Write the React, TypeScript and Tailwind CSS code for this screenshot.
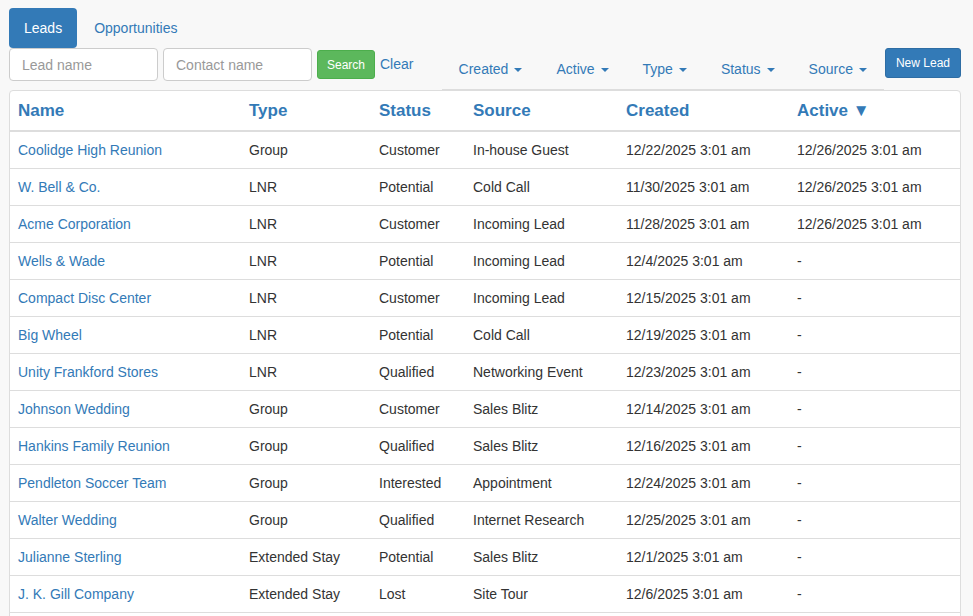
import React from "react";

type Lead = {
  name: string;
  type: string;
  status: string;
  source: string;
  created: string;
  active: string;
};

const leads: Lead[] = [
  { name: "Coolidge High Reunion", type: "Group", status: "Customer", source: "In-house Guest", created: "12/22/2025 3:01 am", active: "12/26/2025 3:01 am" },
  { name: "W. Bell & Co.", type: "LNR", status: "Potential", source: "Cold Call", created: "11/30/2025 3:01 am", active: "12/26/2025 3:01 am" },
  { name: "Acme Corporation", type: "LNR", status: "Customer", source: "Incoming Lead", created: "11/28/2025 3:01 am", active: "12/26/2025 3:01 am" },
  { name: "Wells & Wade", type: "LNR", status: "Potential", source: "Incoming Lead", created: "12/4/2025 3:01 am", active: "-" },
  { name: "Compact Disc Center", type: "LNR", status: "Customer", source: "Incoming Lead", created: "12/15/2025 3:01 am", active: "-" },
  { name: "Big Wheel", type: "LNR", status: "Potential", source: "Cold Call", created: "12/19/2025 3:01 am", active: "-" },
  { name: "Unity Frankford Stores", type: "LNR", status: "Qualified", source: "Networking Event", created: "12/23/2025 3:01 am", active: "-" },
  { name: "Johnson Wedding", type: "Group", status: "Customer", source: "Sales Blitz", created: "12/14/2025 3:01 am", active: "-" },
  { name: "Hankins Family Reunion", type: "Group", status: "Qualified", source: "Sales Blitz", created: "12/16/2025 3:01 am", active: "-" },
  { name: "Pendleton Soccer Team", type: "Group", status: "Interested", source: "Appointment", created: "12/24/2025 3:01 am", active: "-" },
  { name: "Walter Wedding", type: "Group", status: "Qualified", source: "Internet Research", created: "12/25/2025 3:01 am", active: "-" },
  { name: "Julianne Sterling", type: "Extended Stay", status: "Potential", source: "Sales Blitz", created: "12/1/2025 3:01 am", active: "-" },
  { name: "J. K. Gill Company", type: "Extended Stay", status: "Lost", source: "Site Tour", created: "12/6/2025 3:01 am", active: "-" },
];

const filters = ["Created", "Active", "Type", "Status", "Source"];

function Caret() {
  return (
    <span className="ml-[6px] inline-block h-0 w-0 border-x-[4px] border-t-[4px] border-x-transparent border-t-[#337ab7] align-middle" />
  );
}

export default function App() {
  return (
    <div
      className="h-[616px] overflow-hidden bg-[#f8f8f8] pl-[9px] pr-[12px] pt-[8px] text-[14px] text-[#333]"
      style={{ fontFamily: "'Liberation Sans', Arial, sans-serif" }}
    >
      {/* tabs */}
      <div className="flex h-[40px] items-stretch">
        <a className="flex items-center rounded-[4px] bg-[#337ab7] px-[15px] text-white">Leads</a>
        <a className="flex items-center px-[17px] text-[#337ab7]">Opportunities</a>
      </div>

      {/* search + filters */}
      <div className="flex items-start">
        <input
          placeholder="Lead name"
          className="h-[33px] w-[149px] rounded-[4px] border border-[#ccc] bg-white px-[12px] text-[14px] placeholder-[#999] outline-none"
        />
        <input
          placeholder="Contact name"
          className="ml-[5px] h-[33px] w-[149px] rounded-[4px] border border-[#ccc] bg-white px-[12px] text-[14px] placeholder-[#999] outline-none"
        />
        <button className="ml-[5px] mt-[2px] h-[29px] w-[58px] rounded-[3px] border border-[#4cae4c] bg-[#5cb85c] text-[12px] text-white">
          Search
        </button>
        <a className="ml-[5px] mt-[6px] text-[#337ab7]">Clear</a>

        <ul className="ml-auto flex h-[42px] border-b border-[#ddd]">
          {filters.map((f) => (
            <li key={f} className="flex items-center px-[17px] pt-[2px] text-[#337ab7]">
              {f}
              <Caret />
            </li>
          ))}
        </ul>
        <button className="ml-[1px] h-[30px] rounded-[3px] border border-[#2e6da4] bg-[#337ab7] px-[10px] text-[12px] text-white">
          New Lead
        </button>
      </div>

      {/* table */}
      <div className="h-[600px] rounded-t-[4px] border border-[#ddd] bg-white">
        <table className="w-full border-collapse text-left">
          <colgroup>
            <col className="w-[231px]" />
            <col className="w-[130px]" />
            <col className="w-[94px]" />
            <col className="w-[153px]" />
            <col className="w-[171px]" />
            <col />
          </colgroup>
          <thead>
            <tr className="border-b-2 border-[#ddd] text-[17px] font-bold text-[#337ab7]">
              <th className="px-[8px] pb-[7px] pt-[8px] leading-[24px]">Name</th>
              <th className="px-[8px] pb-[7px] pt-[8px] leading-[24px]">Type</th>
              <th className="px-[8px] pb-[7px] pt-[8px] leading-[24px]">Status</th>
              <th className="px-[8px] pb-[7px] pt-[8px] leading-[24px]">Source</th>
              <th className="px-[8px] pb-[7px] pt-[8px] leading-[24px]">Created</th>
              <th className="px-[8px] pb-[7px] pt-[8px] leading-[24px]">Active ▼</th>
            </tr>
          </thead>
          <tbody>
            {leads.map((l) => (
              <tr key={l.name} className="border-b border-[#ddd]">
                <td className="p-[8px] leading-[20px] text-[#337ab7]">{l.name}</td>
                <td className="p-[8px] leading-[20px]">{l.type}</td>
                <td className="p-[8px] leading-[20px]">{l.status}</td>
                <td className="p-[8px] leading-[20px]">{l.source}</td>
                <td className="p-[8px] leading-[20px]">{l.created}</td>
                <td className="p-[8px] leading-[20px]">{l.active}</td>
              </tr>
            ))}
          </tbody>
        </table>
      </div>
    </div>
  );
}
